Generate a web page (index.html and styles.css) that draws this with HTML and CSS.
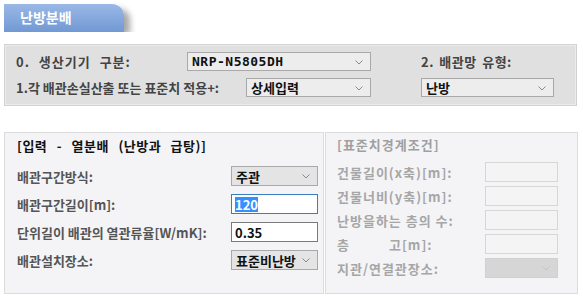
FILE: index.html
```html
<!DOCTYPE html>
<html>
<head>
    <title>난방분배</title>
    <link rel="stylesheet" href="styles.css">
</head>
<body>
    <div class="tab-bar">
        <div class="tab">난방분배</div>
    </div>

    <div class="top-panel">
        <div class="top-left">
            <div class="top-row">
                <span class="label wide">0. 생산기기 구분:</span>
                <div class="sel sel-wide"><span class="val mono">NRP-N5805DH</span><svg class="chev" width="8" height="5" viewBox="0 0 8 5"><path d="M0.5 0.5 L4 4 L7.5 0.5" fill="none" stroke="#8a8a8a" stroke-width="1"/></svg></div>
            </div>
            <div class="top-row">
                <span class="label">1.각 배관손실산출 또는 표준치 적용+:</span>
                <div class="sel sel-mid"><span class="val">상세입력</span><svg class="chev" width="8" height="5" viewBox="0 0 8 5"><path d="M0.5 0.5 L4 4 L7.5 0.5" fill="none" stroke="#8a8a8a" stroke-width="1"/></svg></div>
            </div>
        </div>
        <div class="top-right">
            <div class="top-row">
                <span class="label spaced">2. 배관망 유형:</span>
            </div>
            <div class="top-row">
                <div class="sel sel-net"><span class="val">난방</span><svg class="chev" width="8" height="5" viewBox="0 0 8 5"><path d="M0.5 0.5 L4 4 L7.5 0.5" fill="none" stroke="#8a8a8a" stroke-width="1"/></svg></div>
            </div>
        </div>
    </div>

    <div class="bottom">
        <div class="input-panel">
            <div class="title">[입력 - 열분배 (난방과 급탕)]</div>
            <div class="row">
                <span class="label">배관구간방식:</span>
                <div class="sel ctl"><span class="val">주관</span><svg class="chev" width="8" height="5" viewBox="0 0 8 5"><path d="M0.5 0.5 L4 4 L7.5 0.5" fill="none" stroke="#8a8a8a" stroke-width="1"/></svg></div>
            </div>
            <div class="row">
                <span class="label">배관구간길이[m]:</span>
                <div class="field ctl focus"><span class="picked">120</span></div>
            </div>
            <div class="row">
                <span class="label">단위길이 배관의 열관류율[W/mK]:</span>
                <div class="field ctl"><span class="val">0.35</span></div>
            </div>
            <div class="row">
                <span class="label">배관설치장소:</span>
                <div class="sel ctl"><span class="val">표준비난방</span><svg class="chev" width="8" height="5" viewBox="0 0 8 5"><path d="M0.5 0.5 L4 4 L7.5 0.5" fill="none" stroke="#8a8a8a" stroke-width="1"/></svg></div>
            </div>
        </div>

        <div class="std-panel">
            <div class="title">[표준치경계조건]</div>
            <div class="row">
                <span class="label">건물길이(x축)[m]:</span>
                <div class="field off"></div>
            </div>
            <div class="row">
                <span class="label">건물너비(y축)[m]:</span>
                <div class="field off"></div>
            </div>
            <div class="row">
                <span class="label">난방을하는 층의 수:</span>
                <div class="field off"></div>
            </div>
            <div class="row">
                <span class="label"><span class="spread">층</span>고[m]:</span>
                <div class="field off"></div>
            </div>
            <div class="row">
                <span class="label">지관/연결관장소:</span>
                <div class="sel off-sel"><svg class="chev" width="8" height="5" viewBox="0 0 8 5"><path d="M0.5 0.5 L4 4 L7.5 0.5" fill="none" stroke="#c4c4c4" stroke-width="1"/></svg></div>
            </div>
        </div>
    </div>
</body>
</html>
```

FILE: styles.css
```css
body {
    margin: 0;
    width: 583px;
    font-family: "Noto Sans CJK KR", "DejaVu Sans", sans-serif;
    font-size: 13px;
    background: white;
    color: #444;
}

.tab-bar {
    height: 28px;
    padding: 4px 0 0 4px;
    overflow: hidden;
}
.tab {
    width: 104px;
    height: 28px;
    padding-left: 16px;
    line-height: 27px;
    font-size: 14px;
    font-weight: bold;
    color: white;
    background: linear-gradient(#9ab8e6, #7299d4);
    border-top-right-radius: 12px;
    box-shadow: 7px 4px 6px -1px rgba(0,0,0,0.35);
}

.top-panel {
    display: flex;
    gap: 50px;
    margin: 12px 6px 0 4px;
    padding: 7px 10px 8px 11px;
    background: #e0e0e0;
    border: 1px solid #d2d2d2;
    box-shadow: inset 0 0 0 1px #ececec;
}
.top-left {
    width: 355px;
    display: flex;
    flex-direction: column;
    gap: 7px;
}
.top-right {
    display: flex;
    flex-direction: column;
    gap: 7px;
}
.top-row {
    height: 19px;
    display: flex;
    align-items: center;
    justify-content: space-between;
}
.label {
    font-weight: bold;
    white-space: nowrap;
}
.wide {
    word-spacing: 5px;
    letter-spacing: 1px;
}
.spaced {
    word-spacing: 2px;
    letter-spacing: 0.5px;
}

.sel {
    position: relative;
    box-sizing: border-box;
    height: 19px;
    display: flex;
    align-items: center;
    padding-left: 4px;
    background: #ededed;
    border: 1px solid #a9a9a9;
}
.sel .chev {
    position: absolute;
    right: 7px;
    top: 7px;
}
.val {
    font-weight: bold;
    color: #111;
}
.mono {
    font-family: "DejaVu Sans Mono", "Liberation Mono", monospace;
    letter-spacing: 0.5px;
}
.sel-wide { width: 184px; }
.sel-mid { width: 125px; }
.sel-net { width: 133px; }

.bottom {
    display: flex;
    gap: 1px;
    margin: 26px 5px 0 4px;
}
.input-panel, .std-panel {
    box-sizing: border-box;
    height: 162px;
    background: #f4f4f6;
    border: 1px solid #dcdcdc;
    display: flex;
    flex-direction: column;
}
.input-panel {
    width: 320px;
    padding: 3px 5px 0 12px;
    gap: 8px;
}
.std-panel {
    flex: 1;
    padding: 2px 19px 0 11px;
    gap: 4px;
    color: #a6a6a6;
    letter-spacing: 1px;
}
.title {
    font-weight: bold;
    color: #111;
    line-height: 20px;
}
.input-panel .title {
    margin-bottom: 2px;
    word-spacing: 6px;
    letter-spacing: 0.5px;
}
.std-panel .title {
    color: #a0a0a0;
    margin-bottom: 3px;
}
.row {
    height: 20px;
    display: flex;
    align-items: center;
    justify-content: space-between;
}
.input-panel .label {
    color: #555;
}
.ctl {
    width: 87px;
    height: 20px;
}
.input-panel .sel {
    background: #e4e4e4;
}
.field {
    box-sizing: border-box;
    display: flex;
    align-items: center;
    padding-left: 3px;
    background: white;
    border: 1px solid #7a7a7a;
}
.focus {
    border-color: #3a7dc0;
}
.picked {
    background: #3390ff;
    color: white;
    font-weight: bold;
    line-height: 15px;
}
.off {
    width: 73px;
    height: 20px;
    background: #f4f4f4;
    border-color: #d6d6d6;
}
.off-sel {
    width: 73px;
    height: 20px;
    background: #d6d6d6;
    border-color: #d0d0d0;
}
.spread {
    display: inline-block;
    width: 52px;
}
```
